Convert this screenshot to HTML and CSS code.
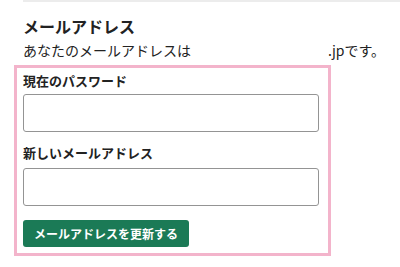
FILE: index.html
```html
<!DOCTYPE html>
<html lang="ja">
<head>
    <meta charset="UTF-8">
    <meta name="viewport" content="width=device-width, initial-scale=1.0">
    <title>メールアドレス</title>
    <link rel="stylesheet" href="styles.css">
</head>
<body>
    <div class="page">
        <div class="divider"></div>

        <!-- メールアドレス変更 -->
        <h2 class="titulo">メールアドレス</h2>
        <p class="atual">あなたのメールアドレスは<span class="email"></span>.jpです。</p>

        <form class="form-box" onsubmit="return false;">
            <label class="rotulo" for="senha">現在のパスワード</label>
            <input type="password" id="senha" class="campo">

            <label class="rotulo segundo" for="novoEmail">新しいメールアドレス</label>
            <input type="text" id="novoEmail" class="campo">

            <button type="submit" class="atualizar">メールアドレスを更新する</button>
        </form>
    </div>
</body>
</html>
```

FILE: styles.css
```css
/* Estilos gerais */
body {
    margin: 0;
    font-family: "Noto Sans CJK JP", "Noto Sans", sans-serif;
    background-color: #fff;
    color: #222;
}
.page {
    padding-left: 14px;
}
.divider {
    margin-left: 9px;
    height: 2px;
    background-color: #ececec;
}
.titulo {
    margin: 13px 0 0 9px;
    font-size: 16px;
    line-height: 22px;
    font-weight: bold;
}
.atual {
    margin: 3px 0 0 9px;
    font-size: 14px;
    line-height: 20px;
    white-space: nowrap;
}
.email {
    display: inline-block;
    width: 137px;
}

/* Caixa do formulário */
.form-box {
    margin-top: 5px;
    width: 296px;
    border: 3px solid #f3b4cb;
    padding: 4px 9px 6px 6px;
    display: flex;
    flex-direction: column;
    align-items: flex-start;
}
.rotulo {
    font-size: 13px;
    line-height: 18px;
    font-weight: bold;
    margin-bottom: 4px;
}
.rotulo.segundo {
    margin-top: 12px;
    margin-bottom: 6px;
}
.campo {
    box-sizing: border-box;
    width: 296px;
    height: 38px;
    margin: 0;
    border: 1px solid #949494;
    border-radius: 3px;
    outline: none;
}
.atualizar {
    margin-top: 14px;
    height: 27px;
    padding: 0 11px;
    background-color: #1b7a56;
    color: #fff;
    border: none;
    border-radius: 3px;
    font-family: inherit;
    font-size: 12px;
    font-weight: bold;
    cursor: pointer;
}
```
